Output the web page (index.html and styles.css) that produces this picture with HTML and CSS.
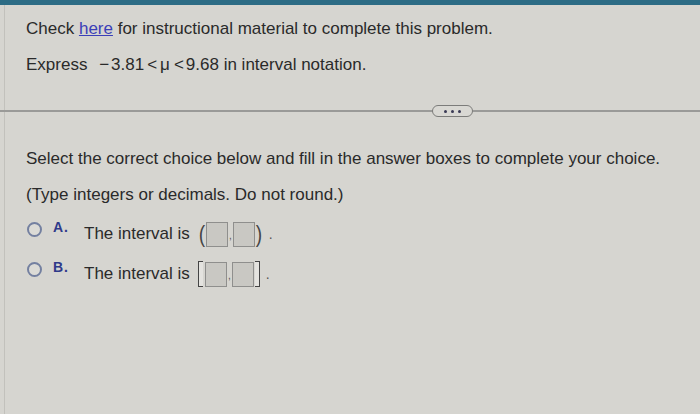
FILE: index.html
```html
<!DOCTYPE html>
<html>
<head>
<meta charset="utf-8">
<link rel="stylesheet" href="styles.css">
</head>
<body>
<div class="topbar"></div>
<div class="page">
  <div class="intro">
    <p class="line first">Check <a class="link" href="#">here</a> for instructional material to complete this problem.</p>
    <p class="line second">Express <span class="math"><span class="minus">&minus;</span>3.81<span class="op">&lt;</span><span class="mu">&mu;</span><span class="op">&lt;</span>9.68</span> in interval notation.</p>
  </div>
  <div class="divider">
    <span class="more"><i></i><i></i><i></i></span>
  </div>
  <div class="question">
    <p class="line select">Select the correct choice below and fill in the answer boxes to complete your choice.</p>
    <p class="line hint">(Type integers or decimals. Do not round.)</p>
    <div class="choice choice-a">
      <span class="radio"></span>
      <span class="letter">A.</span>
      <span class="label">The interval is</span>
      <span class="answer">
        <span class="paren">(</span><span class="box"></span><span class="comma">,</span><span class="box"></span><span class="paren">)</span>
      </span>
      <span class="dot">.</span>
    </div>
    <div class="choice choice-b">
      <span class="radio"></span>
      <span class="letter">B.</span>
      <span class="label">The interval is</span>
      <span class="answer">
        <span class="bracket left"></span><span class="box"></span><span class="comma">,</span><span class="box"></span><span class="bracket right"></span>
      </span>
      <span class="dot">.</span>
    </div>
  </div>
</div>
</body>
</html>
```
FILE: styles.css
```css
html, body {
  margin: 0;
  padding: 0;
}
body {
  background: #d6d5d0;
  font-family: "Liberation Sans", Arial, sans-serif;
  font-size: 17px;
  color: #2a2a2a;
  width: 700px;
  height: 414px;
  overflow: hidden;
}
.topbar {
  height: 5px;
  background: #2d6c85;
}
.page {
  height: 409px;
  border-left: 1px solid #c2c1bc;
  margin-left: 4px;
}
.intro {
  padding: 14px 0 0 21px;
}
.line {
  margin: 0;
  line-height: 20px;
}
.second {
  margin-top: 16px;
}
.minus {
  margin-left: 7px;
  margin-right: 2px;
}
.op {
  margin: 0 2px 0 3px;
}
.mu {
  margin: 0 1px;
}
.link {
  color: #3b3fb8;
  text-decoration: underline;
}
.divider {
  margin-top: 35px;
  margin-left: -5px;
  height: 2px;
  background: #9a9a98;
  position: relative;
}
.more {
  position: absolute;
  left: 432px;
  top: -5px;
  width: 39px;
  height: 10px;
  border: 1px solid #7c7c7a;
  border-radius: 6px;
  background: #d9d8d3;
  display: flex;
  align-items: center;
  justify-content: center;
  gap: 4px;
}
.more i {
  width: 3px;
  height: 3px;
  border-radius: 50%;
  background: #3a3a55;
}
.question {
  padding: 37px 0 0 21px;
}
.hint {
  margin-top: 16px;
}
.choice {
  display: flex;
  align-items: center;
  height: 26px;
}
.choice-a {
  margin-top: 16px;
}
.choice-b {
  margin-top: 14px;
}
.radio {
  align-self: flex-start;
  box-sizing: border-box;
  width: 15px;
  height: 15px;
  border: 2px solid #7480a0;
  border-radius: 50%;
  margin-left: 1px;
  margin-top: 0.5px;
  background: #dcdbd6;
}
.letter {
  align-self: flex-start;
  font-weight: bold;
  font-size: 14px;
  line-height: 16px;
  letter-spacing: 1px;
  color: #2f3a8a;
  margin-left: 11px;
  margin-top: -2px;
}
.label {
  margin-left: 15px;
  line-height: 20px;
}
.answer {
  display: flex;
  align-items: center;
  margin-left: 8px;
  height: 26px;
}
.paren {
  font-size: 24px;
  font-weight: 300;
  color: #444;
  line-height: 26px;
  transform: scaleX(0.8);
}
.box {
  width: 20px;
  height: 23px;
  background: #c9c8c3;
  border: 1px solid #8f8f8d;
}
.comma {
  width: 5px;
  font-size: 10px;
  text-align: center;
  align-self: flex-end;
  margin-bottom: 6px;
  color: #555;
}
.bracket {
  width: 4px;
  height: 24px;
  border: 1.5px solid #444;
  background: #e4e3df;
}
.bracket.left {
  border-right: none;
  margin-right: 2px;
}
.bracket.right {
  border-left: none;
  margin-left: 1px;
}
.dot {
  margin-left: 6px;
  font-size: 14px;
  color: #555;
}
```
